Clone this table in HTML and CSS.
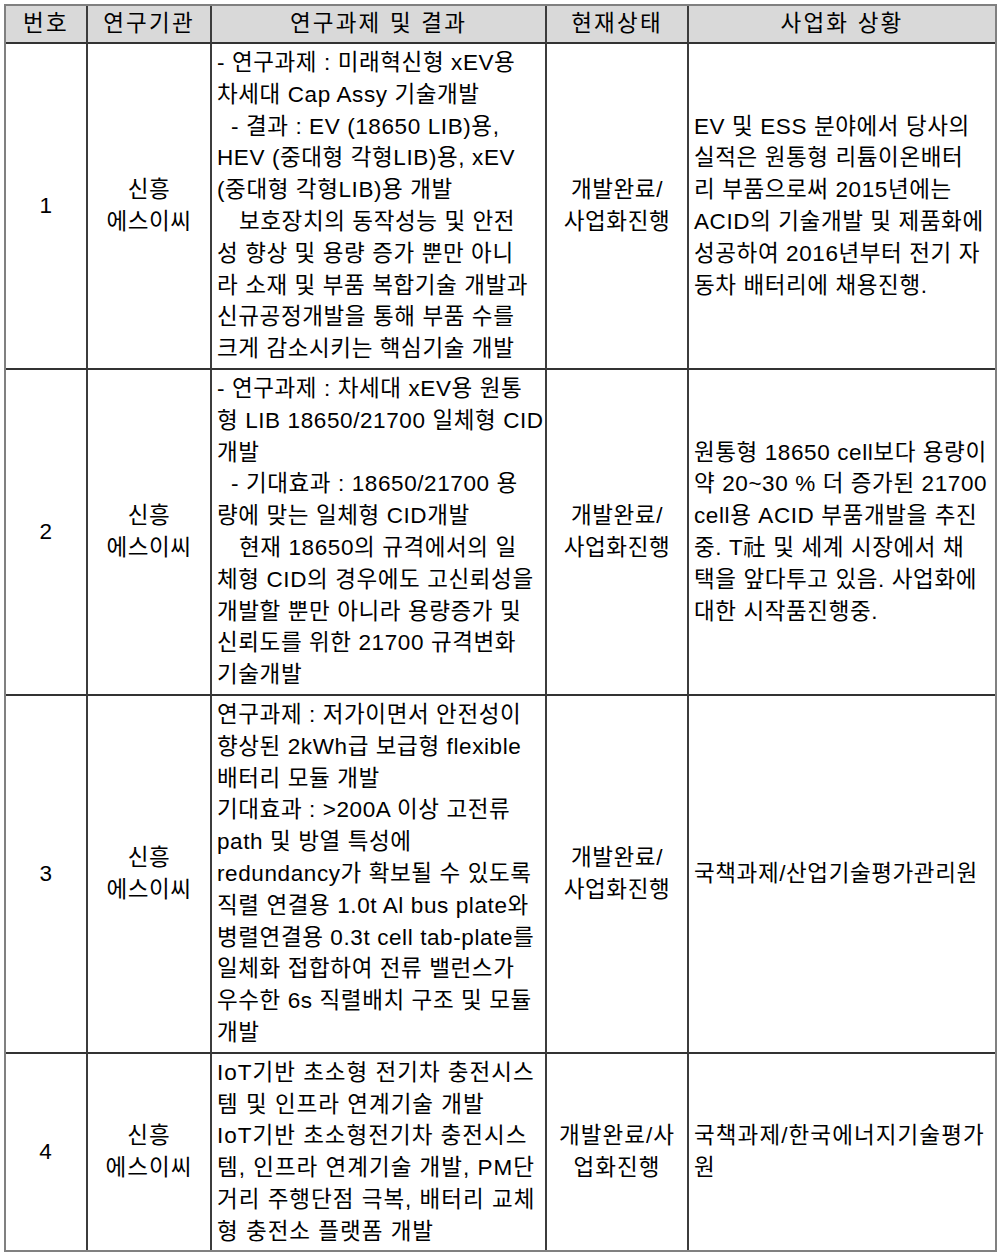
FILE: index.html
```html
<!DOCTYPE html>
<html lang="ko">
<head>
<meta charset="utf-8">
<title>연구과제 및 사업화 현황</title>
<link rel="stylesheet" href="styles.css">
</head>
<body>
<div class="table">
  <div class="row head">
    <div class="c">번호</div>
    <div class="c">연구기관</div>
    <div class="c">연구과제 및 결과</div>
    <div class="c">현재상태</div>
    <div class="c">사업화 상황</div>
  </div>

  <div class="row">
    <div class="c ctr"><div class="ln">1</div></div>
    <div class="c ctr"><div class="ln">신흥</div><div class="ln">에스이씨</div></div>
    <div class="c">
      <div class="ln">- 연구과제 : 미래혁신형 xEV용</div>
      <div class="ln">차세대 Cap Assy 기술개발</div>
      <div class="ln i1">- 결과 : EV (18650 LIB)용,</div>
      <div class="ln">HEV (중대형 각형LIB)용, xEV</div>
      <div class="ln">(중대형 각형LIB)용 개발</div>
      <div class="ln i2">보호장치의 동작성능 및 안전</div>
      <div class="ln">성 향상 및 용량 증가 뿐만 아니</div>
      <div class="ln">라 소재 및 부품 복합기술 개발과</div>
      <div class="ln">신규공정개발을 통해 부품 수를</div>
      <div class="ln">크게 감소시키는 핵심기술 개발</div>
    </div>
    <div class="c ctr"><div class="ln">개발완료/</div><div class="ln">사업화진행</div></div>
    <div class="c">
      <div class="ln">EV 및 ESS 분야에서 당사의</div>
      <div class="ln">실적은 원통형 리튬이온배터</div>
      <div class="ln">리 부품으로써 2015년에는</div>
      <div class="ln">ACID의 기술개발 및 제품화에</div>
      <div class="ln">성공하여 2016년부터 전기 자</div>
      <div class="ln">동차 배터리에 채용진행.</div>
    </div>
  </div>

  <div class="row">
    <div class="c ctr"><div class="ln">2</div></div>
    <div class="c ctr"><div class="ln">신흥</div><div class="ln">에스이씨</div></div>
    <div class="c">
      <div class="ln">- 연구과제 : 차세대 xEV용 원통</div>
      <div class="ln">형 LIB 18650/21700 일체형 CID</div>
      <div class="ln">개발</div>
      <div class="ln i1">- 기대효과 : 18650/21700 용</div>
      <div class="ln">량에 맞는 일체형 CID개발</div>
      <div class="ln i2">현재 18650의 규격에서의 일</div>
      <div class="ln">체형 CID의 경우에도 고신뢰성을</div>
      <div class="ln">개발할 뿐만 아니라 용량증가 및</div>
      <div class="ln">신뢰도를 위한 21700 규격변화</div>
      <div class="ln">기술개발</div>
    </div>
    <div class="c ctr"><div class="ln">개발완료/</div><div class="ln">사업화진행</div></div>
    <div class="c">
      <div class="ln">원통형 18650 cell보다 용량이</div>
      <div class="ln">약 20~30 % 더 증가된 21700</div>
      <div class="ln">cell용 ACID 부품개발을 추진</div>
      <div class="ln">중. T社 및 세계 시장에서 채</div>
      <div class="ln">택을 앞다투고 있음. 사업화에</div>
      <div class="ln">대한 시작품진행중.</div>
    </div>
  </div>

  <div class="row">
    <div class="c ctr"><div class="ln">3</div></div>
    <div class="c ctr"><div class="ln">신흥</div><div class="ln">에스이씨</div></div>
    <div class="c">
      <div class="ln">연구과제 : 저가이면서 안전성이</div>
      <div class="ln">향상된 2kWh급 보급형 flexible</div>
      <div class="ln">배터리 모듈 개발</div>
      <div class="ln">기대효과 : &gt;200A 이상 고전류</div>
      <div class="ln">path 및 방열 특성에</div>
      <div class="ln">redundancy가 확보될 수 있도록</div>
      <div class="ln">직렬 연결용 1.0t Al bus plate와</div>
      <div class="ln">병렬연결용 0.3t cell tab-plate를</div>
      <div class="ln">일체화 접합하여 전류 밸런스가</div>
      <div class="ln">우수한 6s 직렬배치 구조 및 모듈</div>
      <div class="ln">개발</div>
    </div>
    <div class="c ctr"><div class="ln">개발완료/</div><div class="ln">사업화진행</div></div>
    <div class="c">
      <div class="ln">국책과제/산업기술평가관리원</div>
    </div>
  </div>

  <div class="row cond">
    <div class="c ctr"><div class="ln">4</div></div>
    <div class="c ctr"><div class="ln">신흥</div><div class="ln">에스이씨</div></div>
    <div class="c">
      <div class="ln">IoT기반 초소형 전기차 충전시스</div>
      <div class="ln">템 및 인프라 연계기술 개발</div>
      <div class="ln">IoT기반 초소형전기차 충전시스</div>
      <div class="ln">템, 인프라 연계기술 개발, PM단</div>
      <div class="ln">거리 주행단점 극복, 배터리 교체</div>
      <div class="ln">형 충전소 플랫폼 개발</div>
    </div>
    <div class="c ctr"><div class="ln">개발완료/사</div><div class="ln">업화진행</div></div>
    <div class="c tight">
      <div class="ln">국책과제/한국에너지기술평가</div>
      <div class="ln">원</div>
    </div>
  </div>
</div>
</body>
</html>
```

FILE: styles.css
```css
html, body {
  margin: 0;
  padding: 0;
  background: #ffffff;
}

body {
  font-family: "Liberation Sans", "Noto Sans CJK KR", sans-serif;
  font-size: 22.5px;
  color: #000000;
  letter-spacing: 0.6px;
}

.table {
  display: grid;
  grid-template-columns: 82px 124px 335px 142px 306px;
  width: 993px;
  box-sizing: border-box;
  margin: 4px 0 0 4px;
  border: 2px solid #808080;
}

.row {
  display: contents;
}

.c {
  box-sizing: border-box;
  border-right: 2px solid #3c3c3c;
  border-bottom: 2px solid #333333;
  padding: 3px 1px 3px 5px;
  display: flex;
  flex-direction: column;
  justify-content: center;
  min-width: 0;
}

.row .c:last-child {
  border-right: none;
}

.row:last-child .c {
  border-bottom: none;
}

.head .c {
  background: #d9d9d9;
  padding: 0;
  height: 38px;
  line-height: 36px;
  text-align: center;
  letter-spacing: 2.2px;
  display: block;
}

.ln {
  line-height: 31.8px;
  white-space: pre;
}

.ctr {
  text-align: center;
  padding-left: 2px;
  padding-right: 2px;
}

.i1 {
  padding-left: 14px;
}

.i2 {
  padding-left: 22px;
}

.cond .c {
  letter-spacing: 1px;
}

.cond .tight {
  letter-spacing: 1.1px;
}
```
